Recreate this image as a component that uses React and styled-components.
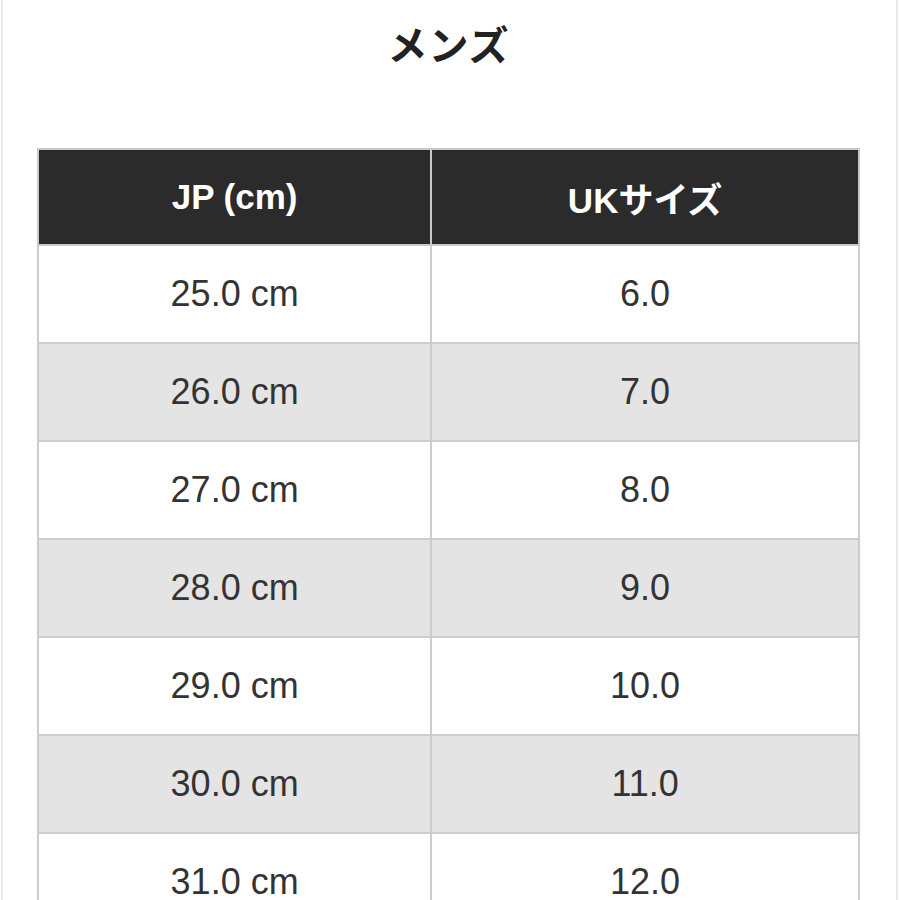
import React from 'react';
import styled, { createGlobalStyle } from 'styled-components';

const GlobalStyle = createGlobalStyle`
	body {
		margin: 0;
		background: #ffffff;
		font-family: "Liberation Sans", Arial, "Noto Sans CJK JP", sans-serif;
	}
`

const Page = styled.div`
	min-height: 900px;
	margin: 0 2px 0 1px;
	padding: 0 36px 0 34px;
	border-left: 2px solid #e9e9e9;
	border-right: 2px solid #e9e9e9;
	overflow: hidden;
`

const Title = styled.h2`
	margin: 0;
	height: 86px;
	line-height: 86px;
	text-align: center;
	font-family: "Noto Sans CJK JP", sans-serif;
	font-size: 40px;
	font-weight: 700;
	color: #222222;
	letter-spacing: 1px;
`

const Table = styled.table`
	width: 100%;
	margin-top: 62px;
	border-collapse: collapse;
	table-layout: fixed;
`

const HeadCell = styled.th`
	height: 94px;
	padding: 0;
	background: #2b2b2b;
	color: #ffffff;
	border: 2px solid #c9c9c9;
	font-size: 35px;
	font-weight: 700;
	text-align: center;
	font-family: "Liberation Sans", Arial, "Noto Sans CJK JP", sans-serif;
`

const Row = styled.tr`
	background: ${props => props.striped ? '#e4e4e4' : '#ffffff'};
`

const Cell = styled.td`
	height: 96px;
	padding: 0;
	border: 2px solid #cdcdcd;
	color: #333333;
	font-size: 36px;
	text-align: center;
`

const sizes = [
	['25.0 cm', '6.0'],
	['26.0 cm', '7.0'],
	['27.0 cm', '8.0'],
	['28.0 cm', '9.0'],
	['29.0 cm', '10.0'],
	['30.0 cm', '11.0'],
	['31.0 cm', '12.0'],
];

const App = () => {
	return (
		<Page>
			<GlobalStyle />
			<Title>メンズ</Title>
			<Table>
				<colgroup>
					<col style={{ width: '47.9%' }} />
					<col style={{ width: '52.1%' }} />
				</colgroup>
				<thead>
					<tr>
						<HeadCell>JP (cm)</HeadCell>
						<HeadCell>UKサイズ</HeadCell>
					</tr>
				</thead>
				<tbody>
					{sizes.map(([jp, uk], i) => (
						<Row key={jp} striped={i % 2 === 1}>
							<Cell>{jp}</Cell>
							<Cell>{uk}</Cell>
						</Row>
					))}
				</tbody>
			</Table>
		</Page>
	)
}

export default App;
